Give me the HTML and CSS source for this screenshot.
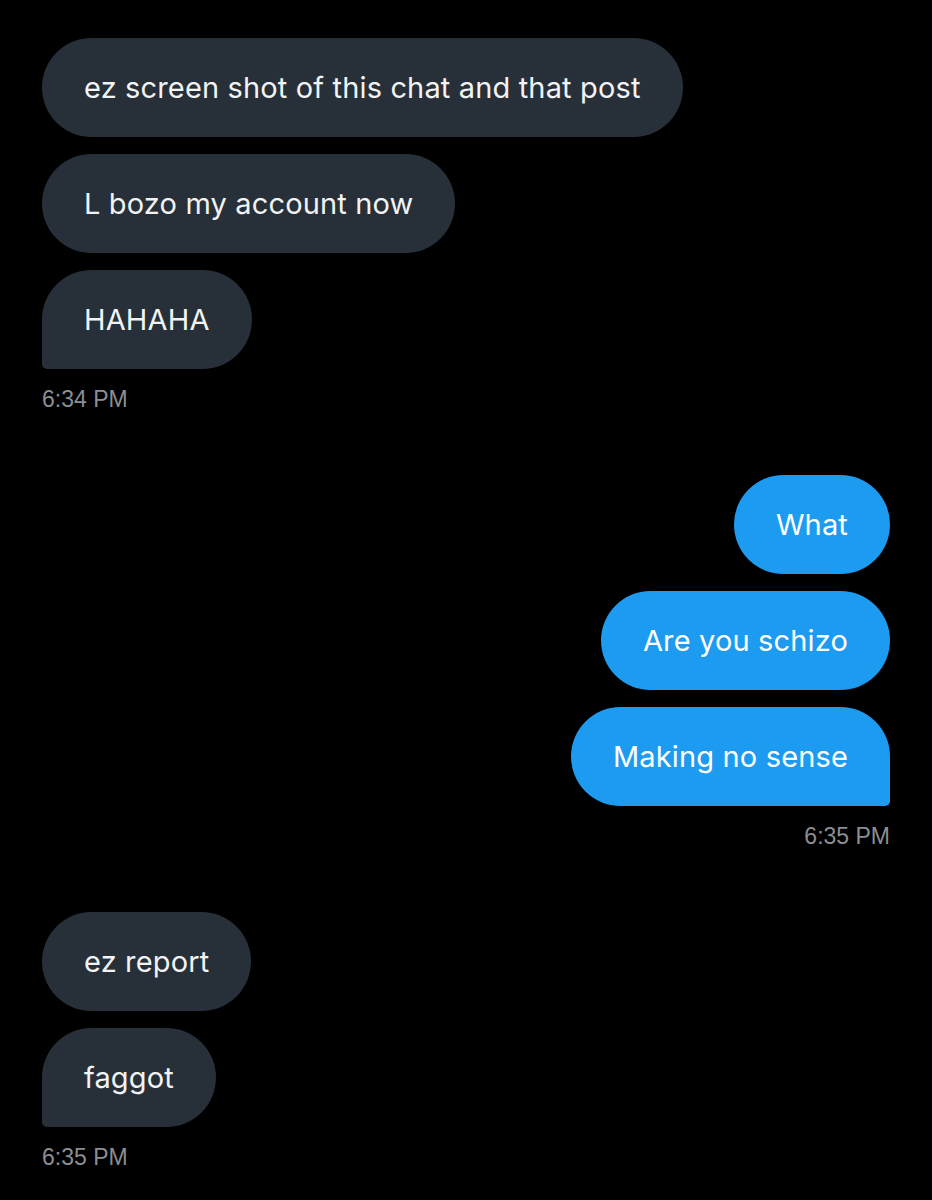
FILE: index.html
```html
<!DOCTYPE html>
<html lang="en">
<head>
  <meta charset="UTF-8" />
  <title>Messages</title>
  <link rel="stylesheet" href="styles.css">
</head>
<body>
  <main class="chat">
    <section class="group received">
      <div class="bubble">ez screen shot of this chat and that post</div>
      <div class="bubble">L bozo my account now</div>
      <div class="bubble last">HAHAHA</div>
      <div class="time">6:34 PM</div>
    </section>
    <section class="group sent">
      <div class="bubble">What</div>
      <div class="bubble">Are you schizo</div>
      <div class="bubble last">Making no sense</div>
      <div class="time">6:35 PM</div>
    </section>
    <section class="group received">
      <div class="bubble">ez report</div>
      <div class="bubble last">faggot</div>
      <div class="time">6:35 PM</div>
    </section>
  </main>
</body>
</html>
```

FILE: styles.css
```css
body {
  background-color: #000;
  margin: 0;
  padding: 0;
  font-family: Inter, "Open Sans", sans-serif;
}
.chat {
  padding: 38px 42px;
  display: flex;
  flex-direction: column;
  gap: 63px;
}
.group {
  display: flex;
  flex-direction: column;
  gap: 17px;
}
.received {
  align-items: flex-start;
}
.sent {
  align-items: flex-end;
}
.bubble {
  color: #f2f3f4;
  font-size: 29px;
  letter-spacing: 0.15px;
  line-height: 35px;
  padding: 32px 42px;
  border-radius: 50px;
  background-color: #273038;
}
.sent .bubble {
  background-color: #1d9bf0;
  color: #fff;
}
.received .last {
  border-bottom-left-radius: 5px;
}
.sent .last {
  border-bottom-right-radius: 5px;
}
.time {
  color: #8b8e92;
  font-family: "Liberation Sans", Arial, sans-serif;
  font-size: 23px;
  line-height: 26px;
  margin-top: 0;
}
```
